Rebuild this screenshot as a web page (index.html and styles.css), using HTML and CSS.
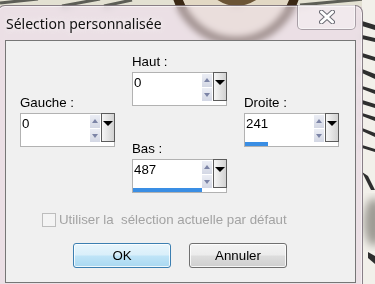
FILE: index.html
```html
<!DOCTYPE html>
<html lang="fr">
<head>
  <meta charset="UTF-8">
  <title>Sélection personnalisée</title>
  <link rel="stylesheet" href="styles.css">
</head>
<body>

<div class="desktop">
  <svg class="wallpaper" width="375" height="284" viewBox="0 0 375 284">
    <defs>
      <filter id="soft"><feGaussianBlur stdDeviation="4"/></filter>
    </defs>
    <rect width="375" height="284" fill="#e4dcd8"/>
    <rect width="375" height="6" fill="#e3e1d2"/>
    <path d="M0 3 L38 -1 M62 6 L100 -1 M104 6 L132 0 M300 5 L375 -2" stroke="#5d5e56" stroke-width="3" fill="none"/>
    <circle cx="236" cy="-20" r="61" fill="#e2d8c4" stroke="#3a2814" stroke-width="9"/>
    <path d="M212 -4 Q236 16 262 -4 Z" fill="#6b5436"/>
    <rect x="362" y="0" width="13" height="284" fill="#f2f0ea"/>
    <g fill="#2e2e2e">
      <path d="M362 21 L375 25 L375 30 L362 26 Z"/>
      <path d="M362 35 L375 38 L375 42 L362 39 Z"/>
      <path d="M362 53 L375 57 L375 61 L362 57 Z"/>
      <path d="M362 69 L375 74 L375 79 L362 73 Z"/>
      <path d="M362 86 L375 90 L375 94 L362 89 Z"/>
      <path d="M362 100 L375 104 L375 108 L362 104 Z"/>
      <path d="M362 113 L375 117 L375 121 L362 116 Z"/>
      <path d="M362 128 L375 133 L375 137 L362 131 Z"/>
      <path d="M362 145 L375 149 L375 152 L362 148 Z"/>
      <path d="M362 172 L368 176 L375 190 L371 190 Z"/>
      <path d="M368 252 L375 256 L375 264 L368 258 Z"/>
    </g>
    <ellipse cx="374" cy="222" rx="10" ry="24" fill="#9e9b94" filter="url(#soft)"/>
  </svg>

  <div class="window">
    <div class="titlebar">
      <span class="title">Sélection personnalisée</span>
      <span class="close">
        <svg width="16" height="14" viewBox="0 0 16 14">
          <path d="M2.5 2 L13.5 12 M13.5 2 L2.5 12" stroke="#6b6b74" stroke-width="5" stroke-linecap="round"/>
          <path d="M2.5 2 L13.5 12 M13.5 2 L2.5 12" stroke="#ffffff" stroke-width="3" stroke-linecap="round"/>
        </svg>
      </span>
    </div>

    <div class="client">
      <div class="fields">
        <div class="col col-side">
          <div class="group">
            <label>Gauche :</label>
            <div class="field">
              <div class="edit"><span class="value">0</span></div>
              <div class="spin"><span class="up"></span><span class="down"></span></div>
              <div class="drop"></div>
            </div>
          </div>
        </div>

        <div class="col">
          <div class="group">
            <label>Haut :</label>
            <div class="field">
              <div class="edit"><span class="value">0</span></div>
              <div class="spin"><span class="up"></span><span class="down"></span></div>
              <div class="drop"></div>
            </div>
          </div>
          <div class="group">
            <label>Bas :</label>
            <div class="field">
              <div class="edit"><span class="value">487</span><span class="bar" style="width: 100%"></span></div>
              <div class="spin"><span class="up"></span><span class="down"></span></div>
              <div class="drop"></div>
            </div>
          </div>
        </div>

        <div class="col col-side">
          <div class="group">
            <label>Droite :</label>
            <div class="field">
              <div class="edit"><span class="value">241</span><span class="bar" style="width: 33%"></span></div>
              <div class="spin"><span class="up"></span><span class="down"></span></div>
              <div class="drop"></div>
            </div>
          </div>
        </div>
      </div>

      <div class="check-row">
        <span class="checkbox"></span>
        <span class="check-label">Utiliser la&nbsp; sélection actuelle par défaut</span>
      </div>

      <div class="buttons">
        <button class="btn btn-default">OK</button>
        <button class="btn">Annuler</button>
      </div>
    </div>
  </div>
</div>

</body>
</html>
```

FILE: styles.css
```css
* {
  box-sizing: border-box;
  margin: 0;
  padding: 0;
}

body {
  width: 375px;
  height: 284px;
  overflow: hidden;
  font-family: "Liberation Sans", Arial, sans-serif;
  font-size: 13.3px;
  color: #000;
}

.desktop {
  position: relative;
  width: 375px;
  height: 284px;
  overflow: hidden;
}

.wallpaper {
  position: absolute;
  left: 0;
  top: 0;
}

/* glass frame */
.window {
  position: absolute;
  left: -3px;
  top: 5px;
  width: 366px;
  height: 300px;
  padding: 0 6px 0 7px;
  border: 1px solid rgba(70, 60, 70, 0.6);
  border-radius: 8px 8px 0 0;
  background: rgba(240, 226, 238, 0.58);
  backdrop-filter: blur(3px);
  box-shadow: inset 0 0 0 1px rgba(255, 255, 255, 0.55);
}

.titlebar {
  height: 34px;
  display: flex;
  align-items: flex-start;
}

.title {
  padding: 8px 0 0 1px;
  font-family: "Noto Sans", "Open Sans", sans-serif;
  font-size: 14px;
  line-height: 20px;
  color: #111;
  text-shadow: 0 0 6px rgba(255, 255, 255, 0.9);
}

.close {
  margin: -1px 0 0 auto;
  width: 59px;
  height: 25px;
  display: flex;
  align-items: center;
  justify-content: center;
  border: 1px solid rgba(80, 70, 80, 0.45);
  border-top: none;
  border-radius: 0 0 5px 5px;
  background: rgba(255, 255, 255, 0.3);
  box-shadow: inset 0 0 0 1px rgba(255, 255, 255, 0.5);
}

.client {
  height: 243px;
  padding: 13px 0 0 14px;
  border: 1px solid #767676;
  background: #f0f0f0;
}

.fields {
  display: grid;
  grid-template-columns: 112px 112px 95px;
  align-items: start;
}

.col-side {
  padding-top: 41px;
}

.group label {
  display: block;
  line-height: 15px;
  margin-bottom: 3px;
}

.group + .group {
  margin-top: 35px;
}

.field {
  display: flex;
  width: 95px;
  height: 34px;
  border: 1px solid #b2b2b2;
  background: #fff;
}

.edit {
  flex: 1;
  display: flex;
  flex-direction: column;
}

.value {
  flex: 1;
  padding: 2px 1px;
  line-height: 15px;
}

.bar {
  height: 4px;
  background: #3a8ee4;
}

.spin {
  width: 10px;
  margin: 1px 1px 0 0;
  display: flex;
  flex-direction: column;
  gap: 1px;
  height: 27px;
}

.spin span {
  flex: 1;
  position: relative;
  background: linear-gradient(#eceef5, #d3d7e4);
}

.spin span::after {
  content: "";
  position: absolute;
  left: 2px;
  border-left: 3px solid transparent;
  border-right: 3px solid transparent;
}

.spin .up::after {
  top: 4px;
  border-bottom: 4px solid #7c84a6;
}

.spin .down::after {
  top: 5px;
  border-top: 4px solid #7c84a6;
}

.drop {
  width: 14px;
  height: 29px;
  margin: -1px -1px 0 0;
  position: relative;
  border: 1px solid #5c5c5c;
  background: linear-gradient(to right, #f6f6f6, #d2d2d2);
}

.drop::after {
  content: "";
  position: absolute;
  left: 1px;
  top: 7px;
  border-left: 5px solid transparent;
  border-right: 5px solid transparent;
  border-top: 5px solid #000;
}

.check-row {
  margin: 19px 0 0 22px;
  display: flex;
  align-items: center;
  gap: 3px;
  line-height: 15px;
  color: #a3a3a3;
}

.checkbox {
  width: 14px;
  height: 14px;
  border: 1px solid #bdbdbd;
  background: #f4f4f4;
}

.buttons {
  display: flex;
  gap: 18px;
  margin: 16px 0 0 53px;
}

.btn {
  width: 98px;
  height: 25px;
  font-family: "Liberation Sans", Arial, sans-serif;
  font-size: 13.3px;
  color: #000;
  border: 1px solid #707070;
  border-radius: 3px;
  background: linear-gradient(#f3f3f3, #ececec 48%, #dddddd 52%, #cfcfcf);
  box-shadow: inset 0 0 0 1px rgba(255, 255, 255, 0.8);
}

.btn-default {
  border-color: #3c7fb1;
  background: linear-gradient(#e8f5fc, #d9effa 48%, #bfe4f7 52%, #a9d8f1);
}
```
